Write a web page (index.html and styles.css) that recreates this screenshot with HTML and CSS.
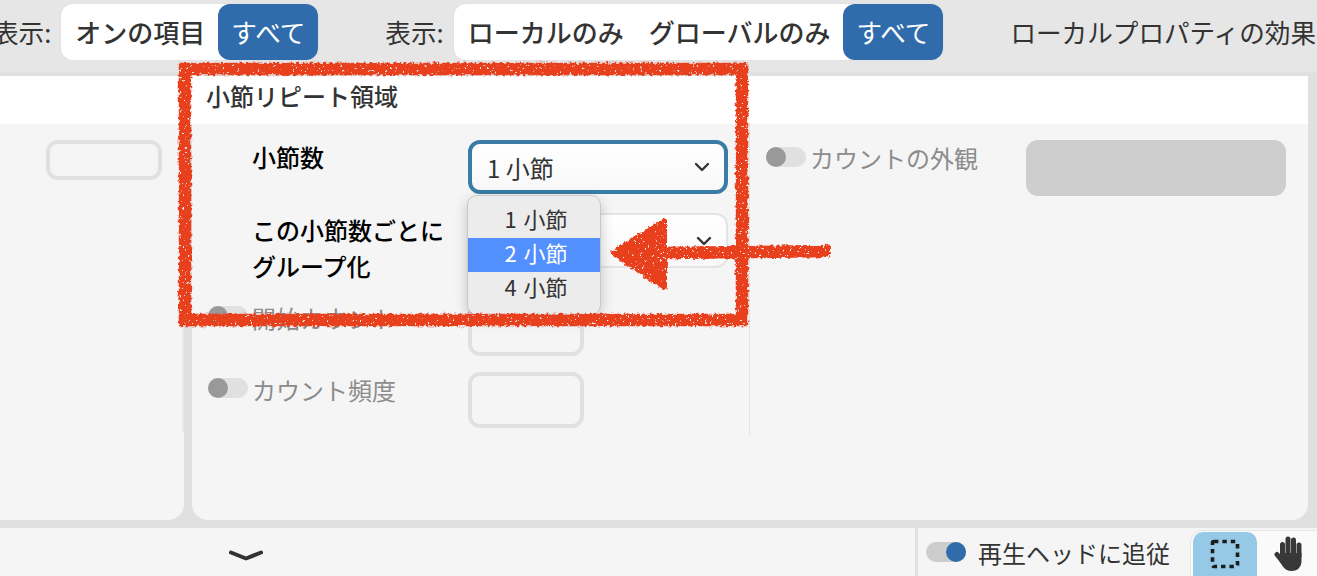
FILE: index.html
```html
<!DOCTYPE html>
<html lang="ja">
<head>
    <meta charset="UTF-8">
    <title>小節リピート領域</title>
    <link rel="stylesheet" href="styles.css">
</head>
<body>
    <div class="toolbar">
        <div class="filter">
            <span>表示:</span>
            <div class="seg">
                <span class="seg-item">オンの項目</span>
                <span class="seg-btn">すべて</span>
            </div>
        </div>
        <div class="filter">
            <span>表示:</span>
            <div class="seg">
                <span class="seg-item">ローカルのみ</span>
                <span class="seg-item">グローバルのみ</span>
                <span class="seg-btn">すべて</span>
            </div>
        </div>
        <span class="effect">ローカルプロパティの効果</span>
    </div>

    <div class="workspace">
        <div class="panel-title">小節リピート領域</div>
        <div class="panels">
            <div class="panel panel-left">
                <div class="left-inner">
                    <div class="box box-small"></div>
                </div>
            </div>
            <div class="panel panel-main">
                <div class="col-props">
                    <div class="row row-first">
                        <span class="toggle-slot"></span>
                        <span class="label label-on">小節数</span>
                        <div class="select select-focus">
                            <span>1 小節</span>
                            <svg class="chevron" viewBox="0 0 16 10"><path d="M2 2l6 6 6-6"/></svg>
                        </div>
                    </div>
                    <div class="row row-second">
                        <span class="toggle-slot"></span>
                        <span class="label label-on">この小節数ごとに<br>グループ化</span>
                        <div class="select">
                            <svg class="chevron" viewBox="0 0 16 10"><path d="M2 2l6 6 6-6"/></svg>
                        </div>
                    </div>
                    <div class="row row-third">
                        <span class="toggle-slot"><span class="toggle"></span></span>
                        <span class="label">開始カウント</span>
                        <div class="box"></div>
                    </div>
                    <div class="row">
                        <span class="toggle-slot"><span class="toggle"></span></span>
                        <span class="label">カウント頻度</span>
                        <div class="box"></div>
                    </div>
                </div>
                <div class="col-count">
                    <span class="toggle"></span>
                    <span class="label label-count">カウントの外観</span>
                    <div class="swatch"></div>
                </div>
            </div>
        </div>
    </div>

    <div class="footer">
        <div class="footer-left">
            <svg class="collapse" viewBox="0 0 34 12"><path d="M2 2.500l15 6 15-6"/></svg>
        </div>
        <div class="footer-right">
            <span class="toggle toggle-on"></span>
            <span class="follow">再生ヘッドに追従</span>
            <div class="tools">
                <span class="tool tool-active">
                    <svg width="30" height="30" viewBox="0 0 30 30"><rect x="2.500" y="2.500" width="25" height="25" rx="1.500" class="marquee"/></svg>
                </span>
                <span class="tool">
                    <svg width="30" height="35" viewBox="0 0 30 35">
                        <path class="hand" d="M8.500 20V8.500M14 18V3M19.500 18V4M25 20V9"/>
                        <path class="hand-thumb" d="M3 18.500l6 7.500"/>
                        <path class="palm" d="M6.500 17h21v8c0 6-4 10-9.500 10-4.500 0-7.500-2-9.500-5l-3-5z"/>
                    </svg>
                </span>
            </div>
        </div>
    </div>

    <div class="menu">
        <div class="menu-item">1 小節</div>
        <div class="menu-item menu-item-active">2 小節</div>
        <div class="menu-item">4 小節</div>
    </div>

    <!-- hand drawn annotation on top of the screenshot -->
    <svg class="markup" width="1317" height="576" viewBox="0 0 1317 576">
        <defs>
            <filter id="crayon" x="-5%" y="-5%" width="110%" height="110%">
                <feTurbulence type="fractalNoise" baseFrequency="0.3" numOctaves="2" seed="4" result="wobble"/>
                <feDisplacementMap in="SourceGraphic" in2="wobble" scale="5" xChannelSelector="R" yChannelSelector="G" result="rough"/>
                <feTurbulence type="fractalNoise" baseFrequency="0.4" numOctaves="2" seed="11" result="grain"/>
                <feColorMatrix in="grain" type="matrix" values="0 0 0 0 0  0 0 0 0 0  0 0 0 0 0  0 0 0 -14 10.500" result="holes"/>
                <feComposite in="rough" in2="holes" operator="in"/>
                <feGaussianBlur stdDeviation="0.4"/>
            </filter>
        </defs>
        <g filter="url(#crayon)">
            <rect x="185" y="69" width="557" height="251" class="markup-line"/>
            <path d="M830 251L664 253" class="markup-line"/>
            <path d="M614 253L664 221V287Z" class="markup-fill"/>
        </g>
    </svg>
</body>
</html>
```

FILE: styles.css
```css
* {
    box-sizing: border-box;
}

body {
    position: relative;
    width: 1317px;
    height: 576px;
    margin: 0;
    overflow: hidden;
    font-family: "Noto Sans CJK JP", "Noto Sans", sans-serif;
    font-size: 24px;
    color: #333;
    background: #e0e0e0;
}

/* top bar */
.toolbar {
    display: flex;
    align-items: center;
    gap: 67px;
    height: 76px;
    margin-left: -7px;
    padding-bottom: 8px;
    font-size: 25.600px;
    line-height: 34px;
    white-space: nowrap;
    background: #e6e6e6;
    border-bottom: 4px solid #e0e0e0;
}

.filter {
    display: flex;
    align-items: center;
    gap: 10px;
}

.seg {
    display: flex;
    align-items: center;
    height: 56px;
    padding-left: 1px;
    background: #fff;
    border-radius: 12px;
    box-shadow: 0 0 0 1px #e2e2e2;
}

.seg-item {
    padding: 0 13px;
    font-size: 26px;
    font-weight: 500;
}

.seg-item + .seg-item {
    padding-left: 12px;
}

.seg-btn {
    display: flex;
    align-items: center;
    justify-content: center;
    width: 100px;
    height: 56px;
    color: #fff;
    background: #306cab;
    border-radius: 12px;
}

/* panels */
.workspace {
    height: 444px;
    padding-right: 9px;
}

.panel-title {
    height: 48px;
    padding-left: 206px;
    font-weight: 500;
    line-height: 40px;
    background: #fff;
}

.panels {
    display: flex;
    gap: 8px;
    height: 396px;
}

.panel {
    background: #f5f5f5;
}

.panel-left {
    width: 184px;
    border-bottom-right-radius: 16px;
}

.left-inner {
    display: flex;
    justify-content: flex-end;
    height: 308px;
    padding: 16px 20px 0 0;
    border-right: 2px solid #e8e8e8;
}

.panel-main {
    display: flex;
    flex: 1;
    border-bottom-left-radius: 16px;
    border-bottom-right-radius: 16px;
}

.col-props {
    width: 558px;
    height: 311px;
    padding-top: 16px;
    border-right: 1px solid #e4e4e4;
}

.row {
    display: flex;
    align-items: flex-start;
}

.row-first {
    height: 73px;
}

.row-second {
    height: 87px;
}

.row-third {
    height: 72px;
}

.toggle-slot {
    display: flex;
    flex: none;
    width: 60px;
    padding: 6px 0 0 16px;
}

.toggle {
    position: relative;
    display: inline-block;
    flex: none;
    width: 40px;
    height: 20px;
    background: #e0e0e0;
    border-radius: 10px;
}

.toggle::before {
    content: "";
    position: absolute;
    left: 0;
    top: 0;
    width: 20px;
    height: 20px;
    background: #999;
    border-radius: 50%;
}

.toggle-on {
    background: #ccc;
}

.toggle-on::before {
    left: 20px;
    background: #306cab;
}

.label {
    flex: none;
    width: 216px;
    line-height: 36px;
    color: #8c8c8c;
}

.label-on {
    font-weight: 500;
    color: #000;
}

.row-first .label,
.row-second .label {
    margin-top: -1px;
}

.box {
    width: 116px;
    height: 56px;
    border: 4px solid #e0e0e0;
    border-radius: 12px;
}

.box-small {
    height: 40px;
}

.select {
    display: flex;
    align-items: center;
    justify-content: space-between;
    width: 260px;
    height: 55px;
    padding: 0 14px 0 18px;
    background: linear-gradient(#fff, #f8f8f8);
    border: 2px solid #e4e4e4;
    border-radius: 12px;
}

.select-focus {
    height: 54px;
    border: 4px solid #3a7ca5;
    padding-left: 15px;
}

.chevron {
    width: 16px;
    height: 10px;
    margin-left: auto;
}

.chevron path {
    fill: none;
    stroke: #333;
    stroke-width: 2.400;
    stroke-linecap: round;
    stroke-linejoin: round;
}

.col-count {
    display: flex;
    align-items: flex-start;
    padding: 16px 0 0 16px;
}

.col-count .toggle {
    margin-top: 7px;
}

.label-count {
    width: 216px;
    margin-left: 4px;
}

.swatch {
    width: 260px;
    height: 56px;
    background: #cecece;
    border-radius: 12px;
}

/* bottom bar */
.footer {
    display: flex;
    height: 48px;
    margin-top: 8px;
    background: #f5f5f5;
}

.footer-left {
    flex: none;
    width: 915px;
    padding: 22px 0 0 229px;
}

.collapse {
    display: block;
    width: 34px;
    height: 12px;
}

.collapse path {
    fill: none;
    stroke: #333;
    stroke-width: 4;
    stroke-linecap: round;
    stroke-linejoin: round;
}

.footer-right {
    display: flex;
    flex: 1;
    align-items: center;
    height: 48px;
    padding-left: 8px;
    border-left: 3px solid #e0e0e0;
}

.follow {
    margin-left: 12px;
    white-space: nowrap;
}

.tools {
    display: flex;
    align-self: flex-end;
    height: 45px;
    margin-left: 21px;
    padding-left: 2px;
    background: #fafafa;
    border-top-left-radius: 12px;
    box-shadow: 0 0 0 1px #e6e6e6;
}

.tool {
    display: flex;
    align-items: center;
    justify-content: center;
    width: 64px;
}

.tool-active {
    margin-top: 1px;
    background: #95c9e5;
    border-top-left-radius: 10px;
    border-top-right-radius: 10px;
}

.marquee {
    fill: none;
    stroke: #1c1c1c;
    stroke-width: 3.600;
    stroke-dasharray: 4.400 4;
}

.hand,
.hand-thumb {
    fill: none;
    stroke: #383838;
    stroke-width: 5;
    stroke-linecap: round;
}

.palm {
    fill: #383838;
}

/* open select list */
.menu {
    position: absolute;
    left: 467px;
    top: 195px;
    width: 134px;
    height: 120px;
    padding-top: 8px;
    font-size: 22px;
    word-spacing: 2px;
    text-align: center;
    background: #ececec;
    border: 1px solid #c8c8c8;
    border-radius: 10px;
    box-shadow: 0 4px 14px rgba(0, 0, 0, 0.2);
}

.menu-item {
    height: 34px;
    padding-left: 4px;
    line-height: 28px;
}

.menu-item-active {
    color: #fff;
    background: #5390ff;
}

.markup {
    position: absolute;
    left: 0;
    top: 0;
}

.markup-line {
    fill: none;
    stroke: #e8401f;
    stroke-width: 12.500;
}

.markup-fill {
    fill: #e8401f;
    stroke: #e8401f;
    stroke-width: 6;
    stroke-linejoin: round;
}
```
